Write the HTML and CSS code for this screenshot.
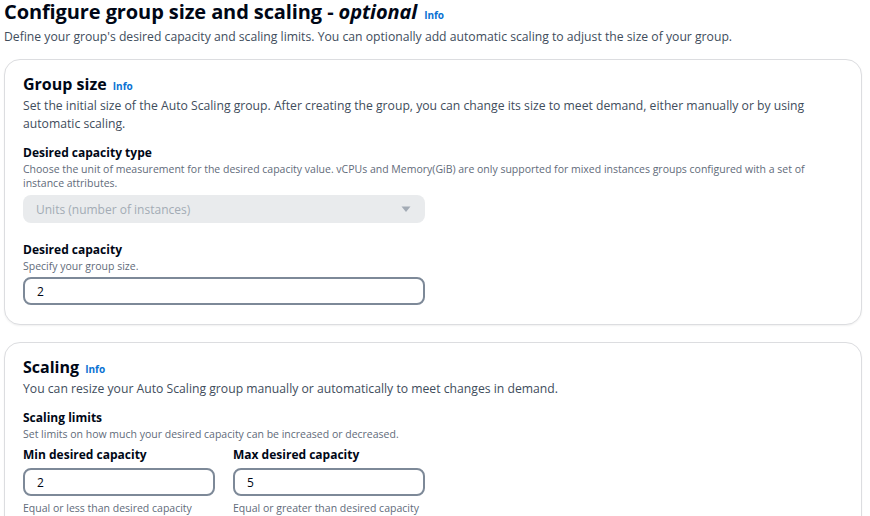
FILE: index.html
```html
<!DOCTYPE html>
<html lang="en">
<head>
<meta charset="utf-8">
<title>Configure group size and scaling</title>
<link rel="stylesheet" href="styles.css">
</head>
<body>
<div class="page">
  <h1 class="title">Configure group size and scaling - <em>optional</em> <a class="info" href="#">Info</a></h1>
  <p class="subtitle">Define your group's desired capacity and scaling limits. You can optionally add automatic scaling to adjust the size of your group.</p>

  <section class="card">
    <h2 class="card-title">Group size <a class="info" href="#">Info</a></h2>
    <p class="card-desc">Set the initial size of the Auto Scaling group. After creating the group, you can change its size to meet demand, either manually or by using automatic scaling.</p>

    <div class="field field-first">
      <div class="label">Desired capacity type</div>
      <div class="hint">Choose the unit of measurement for the desired capacity value. vCPUs and Memory(GiB) are only supported for mixed instances groups configured with a set of instance attributes.</div>
      <div class="select">
        <span>Units (number of instances)</span>
        <svg class="caret" width="10" height="8" viewBox="0 0 10 8"><path d="M0.5 1.5 L9.5 1.5 L5 7 Z" fill="#a3abb5"/></svg>
      </div>
    </div>

    <div class="field field-gap">
      <div class="label">Desired capacity</div>
      <div class="hint">Specify your group size.</div>
      <div class="input">2</div>
    </div>
  </section>

  <section class="card card-second">
    <h2 class="card-title">Scaling <a class="info" href="#">Info</a></h2>
    <p class="card-desc">You can resize your Auto Scaling group manually or automatically to meet changes in demand.</p>

    <div class="field field-first">
      <div class="label">Scaling limits</div>
      <div class="hint">Set limits on how much your desired capacity can be increased or decreased.</div>
      <div class="limits">
        <div class="limit">
          <div class="label label-lg">Min desired capacity</div>
          <div class="input input-small">2</div>
          <div class="help">Equal or less than desired capacity</div>
        </div>
        <div class="limit">
          <div class="label label-lg">Max desired capacity</div>
          <div class="input input-small">5</div>
          <div class="help">Equal or greater than desired capacity</div>
        </div>
      </div>
    </div>
  </section>
</div>
</body>
</html>
```

FILE: styles.css
```css
* { box-sizing: border-box; }

html, body {
  margin: 0;
  padding: 0;
  background: #ffffff;
}

body {
  font-family: "Open Sans", "Noto Sans", Arial, sans-serif;
  color: #000716;
  overflow: hidden;
}

.page {
  padding: 0 8px 0 4px;
}

.title {
  margin: 0;
  font-size: 20px;
  line-height: 24px;
  font-weight: 700;
  letter-spacing: -0.1px;
}

.title em {
  font-style: italic;
}

.info {
  color: #0972d3;
  font-size: 10px;
  line-height: 1;
  font-weight: 700;
  text-decoration: none;
  font-style: normal;
  margin-left: 2px;
}

.subtitle {
  margin: 5px 0 0;
  font-size: 12.2px;
  line-height: 16px;
  color: #414d5c;
}

.card {
  margin-top: 14px;
  border: 1px solid #dcdde0;
  border-radius: 16px;
  padding: 13px 18px 19px;
  box-shadow: 0 1px 2px rgba(0, 7, 22, 0.06);
  background: #fff;
}

.card-second {
  margin-top: 17px;
}

.card-title {
  margin: 0;
  font-size: 16px;
  line-height: 22px;
  font-weight: 700;
}

.card-desc {
  margin: 2px 0 0;
  font-size: 12.2px;
  line-height: 18px;
  color: #414d5c;
  max-width: 800px;
}

.field-first {
  margin-top: 12px;
}

.field-gap {
  margin-top: 19px;
}

.label {
  font-size: 12px;
  line-height: 16px;
  font-weight: 700;
}

.label-lg {
  font-size: 12px;
  line-height: 18px;
}

.hint {
  margin-top: 1px;
  font-size: 10.5px;
  line-height: 14px;
  color: #5f6b7a;
  max-width: 800px;
}

.select {
  margin-top: 5px;
  width: 402px;
  height: 28px;
  border-radius: 8px;
  background: #e9ebed;
  display: flex;
  align-items: center;
  justify-content: space-between;
  padding: 0 14px 0 13px;
  font-size: 12px;
  color: #a3abb5;
}

.input {
  margin-top: 4px;
  width: 402px;
  height: 28px;
  border: 2px solid #7d8998;
  border-radius: 8px;
  display: flex;
  align-items: center;
  padding: 0 12px;
  font-size: 12px;
  color: #000716;
}

.input-small {
  width: 192px;
}

.limits {
  margin-top: 5px;
  display: flex;
  gap: 18px;
}

.help {
  margin-top: 5px;
  font-size: 10.5px;
  line-height: 14px;
  color: #5f6b7a;
}
```
